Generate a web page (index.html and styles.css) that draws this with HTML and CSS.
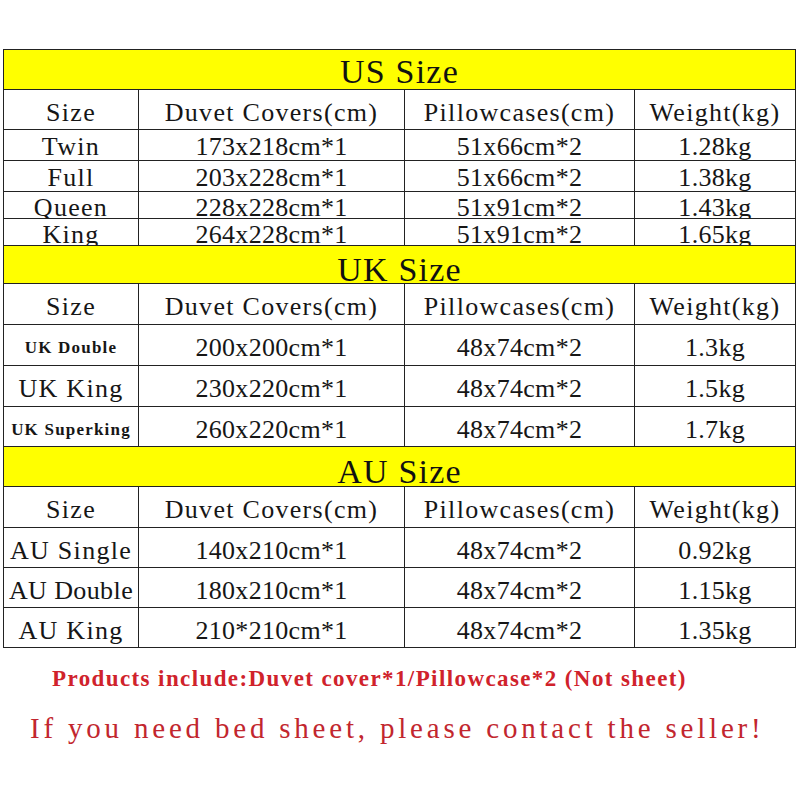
FILE: index.html
```html
<!DOCTYPE html>
<html>
<head>
<meta charset="utf-8">
<link rel="stylesheet" href="styles.css">
</head>
<body>
<div class="sheet">
  <div class="chart">
    <div class="band first"><span class="t title">US Size</span></div>
    <div class="c"><span class="t w">Size</span></div>
    <div class="c"><span class="t w">Duvet Covers(cm)</span></div>
    <div class="c"><span class="t w">Pillowcases(cm)</span></div>
    <div class="c"><span class="t w">Weight(kg)</span></div>

    <div class="c mid"><span class="t w">Twin</span></div>
    <div class="c mid"><span class="t">173x218cm*1</span></div>
    <div class="c mid"><span class="t">51x66cm*2</span></div>
    <div class="c mid"><span class="t">1.28kg</span></div>

    <div class="c mid"><span class="t w">Full</span></div>
    <div class="c mid"><span class="t">203x228cm*1</span></div>
    <div class="c mid"><span class="t">51x66cm*2</span></div>
    <div class="c mid"><span class="t">1.38kg</span></div>

    <div class="c"><span class="t w">Queen</span></div>
    <div class="c"><span class="t">228x228cm*1</span></div>
    <div class="c"><span class="t">51x91cm*2</span></div>
    <div class="c"><span class="t">1.43kg</span></div>

    <div class="c"><span class="t w">King</span></div>
    <div class="c"><span class="t">264x228cm*1</span></div>
    <div class="c"><span class="t">51x91cm*2</span></div>
    <div class="c"><span class="t">1.65kg</span></div>

    <div class="band"><span class="t title">UK Size</span></div>
    <div class="c"><span class="t w">Size</span></div>
    <div class="c"><span class="t w">Duvet Covers(cm)</span></div>
    <div class="c"><span class="t w">Pillowcases(cm)</span></div>
    <div class="c"><span class="t w">Weight(kg)</span></div>

    <div class="c"><span class="t bold">UK Double</span></div>
    <div class="c"><span class="t">200x200cm*1</span></div>
    <div class="c"><span class="t">48x74cm*2</span></div>
    <div class="c"><span class="t">1.3kg</span></div>

    <div class="c"><span class="t w">UK King</span></div>
    <div class="c"><span class="t">230x220cm*1</span></div>
    <div class="c"><span class="t">48x74cm*2</span></div>
    <div class="c"><span class="t">1.5kg</span></div>

    <div class="c"><span class="t bold">UK Superking</span></div>
    <div class="c"><span class="t">260x220cm*1</span></div>
    <div class="c"><span class="t">48x74cm*2</span></div>
    <div class="c"><span class="t">1.7kg</span></div>

    <div class="band"><span class="t title">AU Size</span></div>
    <div class="c"><span class="t w">Size</span></div>
    <div class="c"><span class="t w">Duvet Covers(cm)</span></div>
    <div class="c"><span class="t w">Pillowcases(cm)</span></div>
    <div class="c"><span class="t w">Weight(kg)</span></div>

    <div class="c"><span class="t w">AU Single</span></div>
    <div class="c"><span class="t">140x210cm*1</span></div>
    <div class="c"><span class="t">48x74cm*2</span></div>
    <div class="c"><span class="t">0.92kg</span></div>

    <div class="c"><span class="t w tight">AU Double</span></div>
    <div class="c"><span class="t">180x210cm*1</span></div>
    <div class="c"><span class="t">48x74cm*2</span></div>
    <div class="c"><span class="t">1.15kg</span></div>

    <div class="c"><span class="t w">AU King</span></div>
    <div class="c"><span class="t">210*210cm*1</span></div>
    <div class="c"><span class="t">48x74cm*2</span></div>
    <div class="c"><span class="t">1.35kg</span></div>
  </div>
  <p class="note">Products include:Duvet cover*1/Pillowcase*2 (Not sheet)</p>
  <p class="contact">If you need bed sheet, please contact the seller!</p>
</div>
</body>
</html>
```

FILE: styles.css
```css
html, body {
  margin: 0;
  padding: 0;
  background: #ffffff;
}

.sheet {
  width: 800px;
  height: 800px;
  overflow: hidden;
  padding-top: 49px;
  box-sizing: border-box;
}

.chart {
  margin-left: 3px;
  width: 793px;
  box-sizing: border-box;
  display: grid;
  grid-template-columns: 134px 265px 229px 160px;
  grid-template-rows: 39px 39px 30px 30px 26px 26px 37px 40px 40px 40px 39px 39px 40px 39px 39px 39px;
  gap: 1px;
  padding: 1px;
  background: #222222;
}

.band {
  grid-column: 1 / 5;
  background: #ffff00;
  display: flex;
  align-items: center;
  justify-content: center;
  overflow: hidden;
  padding-top: 10px;
  box-sizing: border-box;
}

.band.first {
  padding-top: 5px;
}

.c {
  background: #ffffff;
  display: flex;
  align-items: center;
  justify-content: center;
  overflow: hidden;
  padding-top: 6px;
  box-sizing: border-box;
}

.c.mid {
  padding-top: 4px;
}

.t {
  display: block;
  font-family: "Liberation Serif", "Times New Roman", serif;
  font-size: 26px;
  line-height: 26px;
  letter-spacing: 0.3px;
  color: #161616;
  white-space: pre;
}

.t.w {
  letter-spacing: 1.3px;
}

.t.w.tight {
  letter-spacing: 0.4px;
}

.t.title {
  font-size: 34px;
  line-height: 34px;
  letter-spacing: 1.2px;
  color: #111111;
}

.t.bold {
  font-size: 17px;
  line-height: 20px;
  font-weight: bold;
  letter-spacing: 1.2px;
}

.note {
  margin: 19px 0 0 52px;
  font-family: "Liberation Serif", "Times New Roman", serif;
  font-weight: bold;
  font-size: 23px;
  line-height: 24px;
  letter-spacing: 1.4px;
  color: #d0222b;
  white-space: nowrap;
}

.contact {
  margin: 22px 0 0 30px;
  font-family: "Liberation Serif", "Times New Roman", serif;
  font-size: 29px;
  line-height: 30px;
  letter-spacing: 3.8px;
  color: #c2262e;
  white-space: nowrap;
}
```
